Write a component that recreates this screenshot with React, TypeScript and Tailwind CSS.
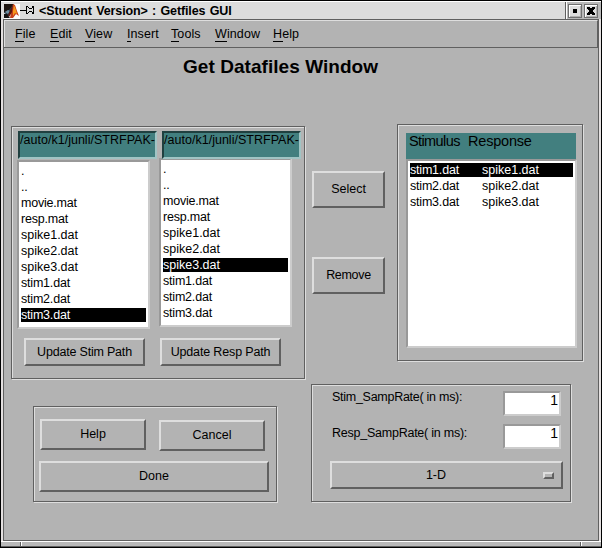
import type { ReactNode } from "react";

const RAISED =
  "flex items-center justify-center border-2 border-t-[#dedede] border-l-[#dedede] border-r-[#606060] border-b-[#606060] bg-[#b3b3b3] text-[12.5px] leading-[14px] whitespace-pre";
const SUNKEN =
  "border-2 border-t-[#999] border-l-[#999] border-r-[#ccc] border-b-[#ccc] bg-white";
const ETCHED =
  "border border-[#606060] shadow-[1px_1px_0_#dedede,inset_1px_1px_0_#dedede]";

function Button({ className, children }: { className: string; children: ReactNode }) {
  return <button className={`${RAISED} ${className}`}>{children}</button>;
}

const FILES = [
  ".",
  "..",
  "movie.mat",
  "resp.mat",
  "spike1.dat",
  "spike2.dat",
  "spike3.dat",
  "stim1.dat",
  "stim2.dat",
  "stim3.dat",
];

function FileList({ selected, className }: { selected: string; className: string }) {
  return (
    <ul className={`${SUNKEN} flex h-[169px] w-[133px] flex-col gap-[2px] p-[2px] ${className}`}>
      {FILES.map((f) => (
        <li
          key={f}
          className={`h-[14px] w-[125px] shrink-0 text-[12.5px] leading-[14px] ${
            f.startsWith("spike") ? "tracking-normal" : "tracking-[-0.2px]"
          } ${f === selected ? "bg-black text-white" : ""}`}
        >
          {f}
        </li>
      ))}
    </ul>
  );
}

function PathBox() {
  return (
    <div className="relative z-10 h-[28px] w-[139px] overflow-hidden border-2 border-t-[#204040] border-l-[#204040] border-r-[#a0c4c4] border-b-[#a0c4c4] bg-[#427f7f] text-[12.5px] leading-[14px] tracking-[0.02px] whitespace-nowrap">
      /auto/k1/junli/STRFPAK-
    </div>
  );
}

const MENUS = [
  { label: "File", w: "w-[35px]", u: "w-[9px]" },
  { label: "Edit", w: "w-[35px]", u: "w-[9px]" },
  { label: "View", w: "w-[42px]", u: "w-[10px]" },
  { label: "Insert", w: "w-[44px]", u: "w-[4px]" },
  { label: "Tools", w: "w-[44px]", u: "w-[8px]" },
  { label: "Window", w: "w-[58px]", u: "w-[12px]" },
  { label: "Help", w: "w-[40px]", u: "w-[10px]" },
];

const PAIRS = [
  ["stim1.dat", "spike1.dat"],
  ["stim2.dat", "spike2.dat"],
  ["stim3.dat", "spike3.dat"],
];

function MatlabLogo() {
  return (
    <svg width="16" height="15" viewBox="0 0 16 15" className="mt-[2px] shrink-0 bg-white">
      <path d="M0 0H10L6 6L0 9Z" fill="#1c1410" />
      <path d="M0 9L2 7L5 6L9 1L7 9L4 13L2 10Z" fill="#253a4a" />
      <path d="M0 10L3 10L6 14H0Z" fill="#111" />
      <path d="M1 8L4 6L6 7L4 10Z" fill="#6e8ea0" />
      <path d="M9 0L11 1L13 7L15 12L12 10L9 14L6 14L7 8Z" fill="#c8401c" />
      <path d="M10 1L12 6L13 10L11 9L9 12L9 7Z" fill="#f79a1e" />
      <path d="M8 2L9 1L8 8L5 13L4 11Z" fill="#5b1710" />
    </svg>
  );
}

function Pin() {
  return (
    <svg width="15" height="8" viewBox="0 0 15 8" shapeRendering="crispEdges" className="mt-[4px] shrink-0">
      <path
        d="M0 4h7v1h-7zM6 0h1v8h-1zM7 0h1v1h-1zM8 1h1v1h-1zM9 2h3v1h-3zM12 1h1v1h-1zM12 0h2v1h-2zM13 0h1v8h-1zM7 7h1v1h-1zM8 6h1v1h-1zM9 5h3v1h-3zM12 6h1v1h-1zM12 7h1v1h-1z"
        fill="#000"
      />
    </svg>
  );
}

function TitleBar() {
  return (
    <header className="flex h-[18px] border-t border-white bg-[#dcdcdc] pl-[3px]">
      <MatlabLogo />
      <Pin />
      <span className="mt-[2px] ml-[4px] grow text-[12.5px] leading-[14px] font-bold tracking-[-0.12px] [word-spacing:1px] whitespace-pre">
        {"<Student Version> : Getfiles GUI"}
      </span>
      <div className="flex w-[36px] gap-[2px] border-l border-[#606060] bg-[#b9b9b9] pt-[2px] pl-[2px] shadow-[inset_1px_0_0_#fff]">
        {["min", "close"].map((kind) => (
          <div key={kind} className="h-[14px] w-[14px] border border-[#707070] bg-[#dedede] shadow-[inset_1px_1px_0_#fff,inset_-1px_-1px_0_#b0b0b0]">
            <svg width="12" height="12" viewBox="0 0 12 12" shapeRendering="crispEdges">
              {kind === "min" ? (
                <rect x="4" y="4" width="4" height="4" />
              ) : (
                <path d="M2 2h3v1h2v-1h3v2h-1v1h-1v2h1v1h1v2h-3v-1h-2v1h-3v-2h1v-1h1v-2h-1v-1h-1z" />
              )}
            </svg>
          </div>
        ))}
      </div>
    </header>
  );
}

export default function App() {
  return (
    <div className="flex h-[548px] w-[602px] flex-col overflow-hidden border border-black bg-[#e4e0e0] font-['Liberation_Sans',Arial,sans-serif] text-black">
      <TitleBar />
      <div className="mr-[2px] ml-[2px] flex h-[522px] flex-col border border-[#606060] bg-[#b3b3b3]">
        <nav className="flex h-[28px] shrink-0 border-t border-r border-b border-t-[#dedede] border-r-[#606060] border-b-[#606060] pl-[11px] shadow-[inset_1px_0_0_#dedede]">
          {MENUS.map((m) => (
            <div key={m.label} className={`${m.w} pt-[6px] text-[12.5px] leading-[14px] tracking-[0.1px]`}>
              {m.label}
              <div className={`${m.u} h-px bg-black`} />
            </div>
          ))}
        </nav>
        <h1 className="h-[76px] shrink-0 pt-[8px] pl-[179px] text-[19px] leading-[22px] font-bold tracking-[0.05px]">
          Get Datafiles Window
        </h1>

        <div className="flex h-[260px] shrink-0 pl-[7px]">
          <section className={`${ETCHED} mt-[2px] h-[253px] w-[294px]`}>
            <div className="flex h-[211px]">
              <div className="w-[142px] pt-[4px] pl-[5px]">
                <div className="pl-[1px]">
                  <PathBox />
                </div>
                <FileList selected="stim3.dat" className="mt-[1px]" />
              </div>
              <div className="pt-[4px] pl-[5px]">
                <div className="pl-[3px]">
                  <PathBox />
                </div>
                <FileList selected="spike3.dat" className="mt-[-1px]" />
              </div>
            </div>
            <div className="flex gap-[15px] pl-[12px]">
              <Button className="h-[28px] w-[121px] tracking-[-0.2px]">Update Stim Path</Button>
              <Button className="h-[28px] w-[121px] tracking-[-0.15px]">Update Resp Path</Button>
            </div>
          </section>
          <div className="mt-[47px] ml-[7px] flex w-[73px] flex-col gap-[49px]">
            <Button className="h-[37px] pb-[2px]">Select</Button>
            <Button className="h-[37px] pb-[2px] tracking-[-0.3px]">Remove</Button>
          </div>
          <section className={`${ETCHED} ml-[12px] h-[237px] w-[186px] pt-[8px] pl-[8px]`}>
            <div className="flex h-[26px] w-[170px] bg-[#427f7f] pl-[3px] text-[14.5px] leading-[17px] whitespace-pre">
              <span className="w-[59px] tracking-[-0.6px]">Stimulus</span>
              <span className="tracking-[-0.2px]">Response</span>
            </div>
            <ul className={`${SUNKEN} flex h-[189px] w-[171px] flex-col gap-[2px] p-[2px]`}>
              {PAIRS.map(([s, r], i) => (
                <li
                  key={s}
                  className={`flex h-[14px] w-[163px] text-[12.5px] leading-[14px] ${
                    i === 0 ? "bg-black text-white" : ""
                  }`}
                >
                  <span className="w-[72px] tracking-[-0.2px]">{s}</span>
                  <span>{r}</span>
                </li>
              ))}
            </ul>
          </section>
        </div>

        <div className="flex pl-[29px]">
          <section className={`${ETCHED} mt-[22px] h-[96px] w-[244px] pt-[12px] pl-[5px]`}>
            <div className="flex gap-[13px] pl-px">
              <Button className="h-[31px] w-[106px] pb-px">Help</Button>
              <Button className="mt-px h-[31px] w-[106px] pb-px">Cancel</Button>
            </div>
            <Button className="mt-[10px] h-[31px] w-[230px] pb-px">Done</Button>
          </section>
          <section className={`${ETCHED} ml-[34px] h-[118px] w-[260px] pt-[6px] pl-[18px]`}>
            <div className="flex h-[33px] pl-[2px]">
              <label className="mt-[-1px] w-[171px] text-[12.5px] leading-[14px] tracking-[-0.27px] whitespace-nowrap">
                Stim_SampRate( in ms):
              </label>
              <div className={`${SUNKEN} h-[25px] w-[58px] pr-px text-right text-[14px] leading-[14px]`}>1</div>
            </div>
            <div className="flex h-[37px] pl-[2px]">
              <label className="mt-[2px] w-[171px] text-[12.5px] leading-[14px] tracking-[-0.24px] whitespace-nowrap">
                Resp_SampRate( in ms):
              </label>
              <div className={`${SUNKEN} h-[25px] w-[58px] pr-px text-right text-[14px] leading-[14px]`}>1</div>
            </div>
            <Button className="h-[28px] w-[233px]">
              <span className="w-[211px] pr-[3px] text-center">1-D</span>
              <span className="mr-[7px] h-[7px] w-[11px] border-2 border-t-[#dedede] border-l-[#dedede] border-r-[#606060] border-b-[#606060]" />
            </Button>
          </section>
        </div>
      </div>
      <footer className="flex h-[6px] border-t border-b border-t-white border-b-[#606060] bg-[#b9b9b9]">
        <div className="w-[20px] border-r border-[#606060]" />
        <div className="w-[560px] border-r border-l border-r-[#606060] border-l-white" />
        <div className="grow border-l border-white" />
      </footer>
    </div>
  );
}
